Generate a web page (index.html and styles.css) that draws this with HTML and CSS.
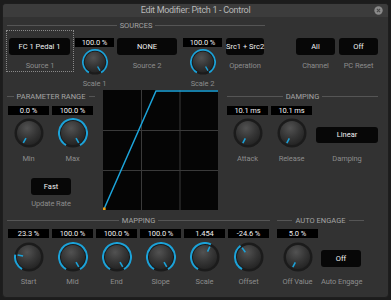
FILE: index.html
```html
<!DOCTYPE html>
<html>
<head>
<meta charset="utf-8">
<link rel="stylesheet" href="styles.css">
</head>
<body>
<div class="window">
  <div class="titlebar">
    <span></span>
    <span class="title">Edit Modifier: Pitch 1 - Control</span>
    <svg class="close" viewBox="0 0 9 9"><circle cx="4.5" cy="4.5" r="4.2" fill="#8a8a8a"/><path d="M2.9 2.9L6.1 6.1M6.1 2.9L2.9 6.1" stroke="#4a4a4a" stroke-width="1.1"/></svg>
  </div>
  <div class="content">
    <div class="row row1">
      <section class="sources">
        <div class="hdr"><span>SOURCES</span></div>
        <div class="ctrls">
          <div class="srcbox">
            <div class="btn w61">FC 1 Pedal 1</div>
            <div class="lbl lbl-btn">Source 1</div>
          </div>
          <div class="kc sm w39 ml1">
            <div class="val">100.0 %</div>
            <svg class="knob" viewBox="0 0 30 30"><circle cx="15" cy="15" r="14.5" fill="#1b1b1b"/><path class="arc" d="M8 27.12A14 14 0 1 1 22 27.12"/><circle cx="15" cy="15" r="12" fill="url(#kg)"/><line class="ind" x1="18" y1="20.2" x2="20.75" y2="24.96"/></svg>
            <div class="lbl">Scale 1</div>
          </div>
          <div class="bc w60 ml3">
            <div class="btn">NONE</div>
            <div class="lbl lbl-btn">Source 2</div>
          </div>
          <div class="kc sm w39 ml6">
            <div class="val">100.0 %</div>
            <svg class="knob" viewBox="0 0 30 30"><circle cx="15" cy="15" r="14.5" fill="#1b1b1b"/><path class="arc" d="M8 27.12A14 14 0 1 1 22 27.12"/><circle cx="15" cy="15" r="12" fill="url(#kg)"/><line class="ind" x1="18" y1="20.2" x2="20.75" y2="24.96"/></svg>
            <div class="lbl">Scale 2</div>
          </div>
          <div class="bc w38 ml4">
            <div class="btn">Src1 + Src2</div>
            <div class="lbl lbl-btn">Operation</div>
          </div>
        </div>
      </section>
      <section class="channel">
        <div class="bc w39">
          <div class="btn">All</div>
          <div class="lbl lbl-btn">Channel</div>
        </div>
        <div class="bc w39 ml4">
          <div class="btn">Off</div>
          <div class="lbl lbl-btn">PC Reset</div>
        </div>
      </section>
    </div>

    <div class="row row2">
      <section class="range">
        <div class="hdr"><span>PARAMETER RANGE</span></div>
        <div class="krow">
          <div class="kc">
            <div class="val">0.0 %</div>
            <svg class="knob" viewBox="0 0 30 30"><circle cx="15" cy="15" r="14.5" fill="#1b1b1b"/><circle cx="15" cy="15" r="12" fill="url(#kg)"/><line class="ind" x1="12" y1="20.2" x2="9.25" y2="24.96"/></svg>
            <div class="lbl">Min</div>
          </div>
          <div class="kc">
            <div class="val">100.0 %</div>
            <svg class="knob" viewBox="0 0 30 30"><circle cx="15" cy="15" r="14.5" fill="#1b1b1b"/><path class="arc" d="M8 27.12A14 14 0 1 1 22 27.12"/><circle cx="15" cy="15" r="12" fill="url(#kg)"/><line class="ind" x1="18" y1="20.2" x2="20.75" y2="24.96"/></svg>
            <div class="lbl">Max</div>
          </div>
        </div>
        <div class="fast">
          <div class="btn w40">Fast</div>
          <div class="lbl lbl-fast">Update Rate</div>
        </div>
      </section>

      <svg class="graph" viewBox="0 0 115 120">
        <rect width="115" height="120" fill="#050505"/>
        <path d="M38.5 0V120M77 0V120M0 40.5H115M0 80.5H115" stroke="#3a3a3a" stroke-width="1"/>
        <polyline points="1,119 53,0.9 115,0.9" fill="none" stroke="#1ca4da" stroke-width="1.5"/>
        <rect x="0" y="117.5" width="2.6" height="2.6" fill="#f0a010"/>
      </svg>

      <section class="damping">
        <div class="hdr"><span>DAMPING</span></div>
        <div class="krow">
          <div class="kc">
            <div class="val">10.1 ms</div>
            <svg class="knob" viewBox="0 0 30 30"><circle cx="15" cy="15" r="14.5" fill="#1b1b1b"/><circle cx="15" cy="15" r="12" fill="url(#kg)"/><line class="ind" x1="12.3" y1="20.4" x2="9.8" y2="25.2"/></svg>
            <div class="lbl">Attack</div>
          </div>
          <div class="kc">
            <div class="val">10.1 ms</div>
            <svg class="knob" viewBox="0 0 30 30"><circle cx="15" cy="15" r="14.5" fill="#1b1b1b"/><circle cx="15" cy="15" r="12" fill="url(#kg)"/><line class="ind" x1="12.3" y1="20.4" x2="9.8" y2="25.2"/></svg>
            <div class="lbl">Release</div>
          </div>
          <div class="bc w62 ml1 lin">
            <div class="btn">Linear</div>
            <div class="lbl lbl-side">Damping</div>
          </div>
        </div>
      </section>
    </div>

    <div class="row row3">
      <section class="mapping">
        <div class="hdr"><span>MAPPING</span></div>
        <div class="krow">
          <div class="kc">
            <div class="val">23.3 %</div>
            <svg class="knob" viewBox="0 0 30 30"><circle cx="15" cy="15" r="14.5" fill="#1b1b1b"/><path class="arc" d="M8 27.12A14 14 0 0 1 1.21 12.57"/><circle cx="15" cy="15" r="12" fill="url(#kg)"/><line class="ind" x1="9.09" y1="13.96" x2="3.67" y2="13"/></svg>
            <div class="lbl">Start</div>
          </div>
          <div class="kc">
            <div class="val">100.0 %</div>
            <svg class="knob" viewBox="0 0 30 30"><circle cx="15" cy="15" r="14.5" fill="#1b1b1b"/><path class="arc" d="M8 27.12A14 14 0 1 1 22 27.12"/><circle cx="15" cy="15" r="12" fill="url(#kg)"/><line class="ind" x1="18" y1="20.2" x2="20.75" y2="24.96"/></svg>
            <div class="lbl">Mid</div>
          </div>
          <div class="kc">
            <div class="val">100.0 %</div>
            <svg class="knob" viewBox="0 0 30 30"><circle cx="15" cy="15" r="14.5" fill="#1b1b1b"/><path class="arc" d="M8 27.12A14 14 0 1 1 22 27.12"/><circle cx="15" cy="15" r="12" fill="url(#kg)"/><line class="ind" x1="18" y1="20.2" x2="20.75" y2="24.96"/></svg>
            <div class="lbl">End</div>
          </div>
          <div class="kc">
            <div class="val">100.0 %</div>
            <svg class="knob" viewBox="0 0 30 30"><circle cx="15" cy="15" r="14.5" fill="#1b1b1b"/><path class="arc" d="M8 27.12A14 14 0 1 1 22 27.12"/><circle cx="15" cy="15" r="12" fill="url(#kg)"/><line class="ind" x1="18" y1="20.2" x2="20.75" y2="24.96"/></svg>
            <div class="lbl">Slope</div>
          </div>
          <div class="kc">
            <div class="val">1.454</div>
            <svg class="knob" viewBox="0 0 30 30"><circle cx="15" cy="15" r="14.5" fill="#1b1b1b"/><path class="arc" d="M8 27.12A14 14 0 0 1 20.92 2.31"/><circle cx="15" cy="15" r="12" fill="url(#kg)"/><line class="ind" x1="17.54" y1="9.56" x2="19.86" y2="4.58"/></svg>
            <div class="lbl">Scale</div>
          </div>
          <div class="kc">
            <div class="val">-24.6 %</div>
            <svg class="knob" viewBox="0 0 30 30"><circle cx="15" cy="15" r="14.5" fill="#1b1b1b"/><path class="arc" d="M8 27.12A14 14 0 0 1 6.57 3.82"/><circle cx="15" cy="15" r="12" fill="url(#kg)"/><line class="ind" x1="11.39" y1="10.21" x2="8.08" y2="5.82"/></svg>
            <div class="lbl">Offset</div>
          </div>
        </div>
      </section>
      <section class="engage">
        <div class="hdr"><span>AUTO ENGAGE</span></div>
        <div class="krow">
          <div class="kc">
            <div class="val">5.0 %</div>
            <svg class="knob" viewBox="0 0 30 30"><circle cx="15" cy="15" r="14.5" fill="#1b1b1b"/><circle cx="15" cy="15" r="12" fill="url(#kg)"/><line class="ind" x1="12.3" y1="20.4" x2="9.8" y2="25.2"/></svg>
            <div class="lbl">Off Value</div>
          </div>
          <div class="bc w40 ae">
            <div class="btn">Off</div>
            <div class="lbl lbl-side">Auto Engage</div>
          </div>
        </div>
      </section>
    </div>
  </div>
  <svg class="defs" width="0" height="0">
    <defs>
      <radialGradient id="kg" cx="0.42" cy="0.3" r="0.8">
        <stop offset="0" stop-color="#525252"/>
        <stop offset="0.5" stop-color="#363636"/>
        <stop offset="1" stop-color="#1f1f1f"/>
      </radialGradient>
    </defs>
  </svg>
</div>
</body>
</html>
```

FILE: styles.css
```css
* { box-sizing: border-box; }

html, body {
  margin: 0;
  padding: 0;
  background: #1c1c1c;
  font-family: Roboto, "Liberation Sans", sans-serif;
  width: 391px;
  height: 300px;
  overflow: hidden;
}

.window {
  margin: 3px 0 0 2px;
  width: 387px;
  height: 295px;
  background: #323232;
  border: 1px solid #1e1e1e;
  border-radius: 4px;
  overflow: hidden;
}

.titlebar {
  height: 13px;
  background: #3c3c3c;
  display: grid;
  grid-template-columns: 1fr auto 1fr;
  align-items: center;
}

.title {
  font-size: 9px;
  line-height: 13px;
  color: #b8b8b8;
  letter-spacing: -0.3px;
  white-space: nowrap;
}

.close {
  justify-self: end;
  width: 9px;
  height: 9px;
  margin-right: 5px;
  display: block;
}

.content {
  padding-left: 3px;
}

.row { display: flex; align-items: flex-start; }

.row1 { padding-top: 4px; }
.row2 { margin-top: 2.5px; }
.row3 { margin-top: 5.5px; }

/* section headers */
.hdr {
  display: flex;
  align-items: center;
  height: 9px;
  font-size: 7.5px;
  line-height: 9px;
  color: #a4a4a4;
  white-space: nowrap;
}
.hdr::before, .hdr::after {
  content: "";
  flex: 1;
  height: 1px;
  background: #555;
}
.hdr span { padding: 0 3px; }

/* buttons */
.btn {
  height: 17px;
  background: #070707;
  border-radius: 3px;
  color: #f2f2f2;
  font-size: 7.5px;
  font-weight: 400;
  line-height: 17px;
  text-align: center;
  white-space: nowrap;
}

.lbl {
  font-size: 7.5px;
  line-height: 9px;
  color: #8c8c8c;
  text-align: center;
  white-space: nowrap;
  letter-spacing: -0.1px;
}

.val {
  height: 9px;
  background: #000;
  color: #f0f0f0;
  font-size: 7.5px;
  line-height: 9px;
  text-align: center;
  white-space: nowrap;
  letter-spacing: -0.1px;
}

.knob {
  display: block;
  width: 30px;
  height: 30px;
  margin: 3px auto 0;
}
.arc { fill: none; stroke: #1ca2d8; stroke-width: 2; }
.ind { stroke: #1ca2d8; stroke-width: 1.6; }

.kc { width: 41px; }
.kc .lbl { margin-top: 5.5px; }

.kc.sm { padding-top: 8px; }
.kc.sm .knob { width: 26px; height: 26px; margin-top: 2px; }
.kc.sm .lbl { margin-top: 3.5px; }

.bc { padding-top: 8px; }
.lbl-btn { margin-top: 5.5px; }

.w38 { width: 38px; }
.w39 { width: 39px; }
.w40 { width: 40px; }
.w60 { width: 60px; }
.w61 { width: 61px; }
.w62 { width: 62px; }
.ml1 { margin-left: 1px; }
.ml3 { margin-left: 3px; }
.ml4 { margin-left: 4px; }
.ml6 { margin-left: 6px; }

/* row 1 */
.sources { width: 259px; }
.sources .hdr { margin-left: 1px; }
.ctrls { display: flex; align-items: flex-start; }
.srcbox {
  width: 68px;
  height: 42px;
  border: 1px dotted #8a8a8a;
  padding: 7px 2px 0 2px;
}
.channel {
  display: flex;
  margin-left: 31px;
  padding-top: 9px;
}

/* row 2 */
.range { width: 88px; margin-left: 1px; margin-top: 1.5px; }
.krow { display: flex; gap: 3px; align-items: flex-start; }
.range .krow { margin-left: 1px; margin-top: 5.5px; }
.fast { width: 40px; margin: 15.5px auto 0; }
.lbl-fast { margin-top: 3.5px; }

.graph {
  display: block;
  width: 115px;
  height: 120px;
  margin-left: 8px;
}

.damping { width: 151px; margin-left: 9px; margin-top: 2px; }
.damping .krow { margin-top: 5px; }
.lin { padding-top: 21px; }
.lin .btn { height: 16px; line-height: 16px; }
.lbl-side { margin-top: 10.5px; }

/* row 3 */
.mapping { width: 263px; margin-left: 1px; }
.mapping .krow { margin-left: 1px; margin-top: 4.5px; }
.mapping .knob, .engage .knob { margin-top: 4px; }
.mapping .lbl, .engage .kc .lbl { margin-top: 4.5px; }
.engage { width: 87px; margin-left: 7px; }
.engage .krow { margin-top: 4.5px; }
.ae { padding-top: 21px; }
.ae .lbl-side { margin-top: 10px; }

.defs { display: block; width: 0; height: 0; overflow: hidden; }
```
